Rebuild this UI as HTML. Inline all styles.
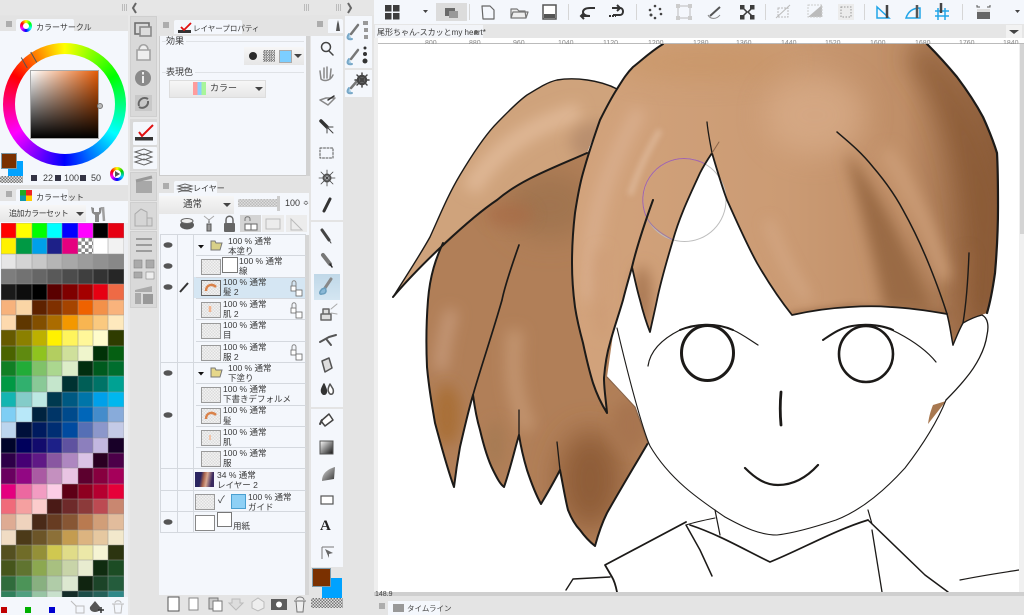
<!DOCTYPE html>
<html><head><meta charset="utf-8">
<style>
html,body{margin:0;padding:0;width:1024px;height:615px;overflow:hidden;background:#e4e4e4}
body{position:relative;font:8.5px "Liberation Sans","Noto Sans CJK JP",sans-serif;color:#333;filter:blur(.3px)}
.a{position:absolute}
.t{position:absolute;white-space:nowrap;line-height:11px;color:#3a3a3a}
.p{position:absolute;background:#f4f7fc}
.h{position:absolute;background:#e3e3e3}
.tab{position:absolute;background:#f4f7fc;border-radius:2px 2px 0 0}
.g{position:absolute;background:#d9d9d9;border:1px solid #cfcfcf;box-sizing:border-box}
.w{position:absolute;background:#f4f7fc;border-radius:1px}
.btn{position:absolute;background:linear-gradient(#f6f6f6,#e6e6e6);border:1px solid #ddd;box-sizing:border-box}
#pal{position:absolute;left:1px;top:223px;width:123px;height:374px;overflow:hidden;display:grid;grid-template-columns:repeat(8,15.33px);grid-auto-rows:15.33px}
#pal i{display:block;box-shadow:inset 0 0 0 .5px rgba(150,150,150,.5)}
.th{position:absolute;width:18px;height:14px;border:1px solid #9a9a9a;background:#e6e6e6 repeating-conic-gradient(#dcdcdc 0 25%,#f2f2f2 0 50%) 0 0/3px 3px}
.sep{position:absolute;left:160px;width:146px;height:1px;background:#d4d8de}
.ck{position:absolute;background:#e8e8e8 repeating-conic-gradient(#777 0 25%,#e0e0e0 0 50%) 0 0/3px 3px}
</style></head><body>

<!-- top strips -->
<div class="a" style="left:0;top:0;width:128px;height:15px;background:#e6e6e6"></div>
<div class="a" style="left:128px;top:0;width:246px;height:15px;background:#e6e6e6"></div>
<div class="a" style="left:128px;top:15px;width:2px;height:600px;background:#e8e8e8"></div>

<!-- LEFT PANEL color circle -->
<div class="h" style="left:0;top:16px;width:128px;height:15px"></div>
<div class="tab" style="left:16px;top:19px;width:58px;height:13px"></div>
<div class="p" style="left:0;top:31px;width:128px;height:154px"></div>
<div class="t" style="left:36px;top:22px;font-size:8px">カラーサークル</div>
<div class="a" style="left:20px;top:20px;width:12px;height:12px;border-radius:50%;background:conic-gradient(#ff0,#0f0,#0ff,#00f,#f0f,#f00,#ff0)"></div>
<div class="a" style="left:23px;top:23px;width:6px;height:6px;border-radius:50%;background:#fff"></div>
<div class="a" style="left:3px;top:43px;width:123px;height:123px;border-radius:50%;background:conic-gradient(#ff0 0deg,#0f0 60deg,#0ff 120deg,#00f 180deg,#f0f 240deg,#f00 300deg,#ff0 360deg)"></div>
<div class="a" style="left:15px;top:54px;width:100px;height:100px;border-radius:50%;background:#f4f7fc"></div>
<div class="a" style="left:30px;top:70px;width:69px;height:69px;box-sizing:border-box;border:1px solid #aaa;background:linear-gradient(to bottom,rgba(0,0,0,0),#000),linear-gradient(to right,#fff,#e45c08)"></div>
<div class="a" style="left:97px;top:103px;width:4px;height:4px;background:#bbb;border-radius:50%;border:.5px solid #777"></div>
<div class="a" style="left:23px;top:54px;width:10px;height:12px;transform:rotate(-30deg);border-left:1px solid #555;border-right:1px solid #555"></div>
<div class="a" style="left:8px;top:161px;width:15px;height:15px;background:#00a2ff"></div>
<div class="a" style="left:1px;top:153px;width:14px;height:14px;background:#7a3000;border:1px solid #7d99a8"></div>
<div class="ck" style="left:0;top:176px;width:23px;height:7px"></div>
<div class="a" style="left:31px;top:175px;width:6px;height:6px;background:#334;"></div>
<div class="t" style="left:43px;top:173px;font-size:9px">22</div>
<div class="a" style="left:55px;top:175px;width:6px;height:6px;background:#334;"></div>
<div class="t" style="left:64px;top:173px;font-size:9px">100</div>
<div class="a" style="left:80px;top:175px;width:6px;height:6px;background:#334;"></div>
<div class="t" style="left:91px;top:173px;font-size:9px">50</div>
<div class="a" style="left:110px;top:167px;width:14px;height:14px;border-radius:50%;background:conic-gradient(#ff0,#0c0,#0cf,#00f,#f0f,#f00,#ff0)"></div>
<div class="a" style="left:113px;top:170px;width:8px;height:8px;border-radius:50%;background:#fff"></div>
<div class="a" style="left:115px;top:171px;border-left:5px solid #555;border-top:3px solid transparent;border-bottom:3px solid transparent"></div>

<!-- color set -->
<div class="h" style="left:0;top:186px;width:128px;height:15px"></div>
<div class="tab" style="left:16px;top:189px;width:52px;height:13px"></div>
<div class="p" style="left:0;top:201px;width:128px;height:414px"></div>
<div class="t" style="left:36px;top:192px;font-size:8px">カラーセット</div>
<div class="a" style="left:20px;top:190px;width:12px;height:11px;background:conic-gradient(#e22 25%,#fc0 0 50%,#19a 0 75%,#2a2 0)"></div>
<div class="btn" style="left:0;top:205px;width:86px;height:17px;border:0"></div>
<div class="t" style="left:9px;top:208px;font-size:8px;letter-spacing:-.6px">追加カラーセット</div>
<div class="a" style="left:76px;top:212px;border-top:4px solid #444;border-left:4px solid transparent;border-right:4px solid transparent"></div>
<div id="pal">
<i style="background:#f00"></i><i style="background:#ff0"></i><i style="background:#0f0"></i><i style="background:#0ff"></i><i style="background:#00f"></i><i style="background:#f0f"></i><i style="background:#000"></i><i style="background:#e60012"></i>
<i style="background:#fff100"></i><i style="background:#009944"></i><i style="background:#00a0e9"></i><i style="background:#1d2088"></i><i style="background:#e4007f"></i><i style="background:#fff repeating-conic-gradient(#888 0 25%,#fff 0 50%) 0 0/7px 7px"></i><i style="background:#fff"></i><i style="background:#f2f2f2"></i>
<i style="background:#e6e6e6"></i><i style="background:#d4d4d4"></i><i style="background:#c8c8c8"></i><i style="background:#b5b5b5"></i><i style="background:#a8a8a8"></i><i style="background:#9c9c9c"></i><i style="background:#919191"></i><i style="background:#888"></i>
<i style="background:#7d7d7d"></i><i style="background:#727272"></i><i style="background:#666"></i><i style="background:#595959"></i><i style="background:#4c4c4c"></i><i style="background:#3f3f3f"></i><i style="background:#333"></i><i style="background:#262626"></i>
<i style="background:#1a1a1a"></i><i style="background:#0d0d0d"></i><i style="background:#000"></i><i style="background:#5a0000"></i><i style="background:#7f0000"></i><i style="background:#a40000"></i><i style="background:#e60012"></i><i style="background:#ee6a45"></i>
<i style="background:#f7b27c"></i><i style="background:#fad5a5"></i><i style="background:#5e2200"></i><i style="background:#7f3000"></i><i style="background:#a54400"></i><i style="background:#ef6200"></i><i style="background:#f39149"></i><i style="background:#f9b37c"></i>
<i style="background:#fdd9ae"></i><i style="background:#5f3700"></i><i style="background:#824f00"></i><i style="background:#ab6c00"></i><i style="background:#f39800"></i><i style="background:#f8b551"></i><i style="background:#fac97f"></i><i style="background:#fee9bd"></i>
<i style="background:#665a00"></i><i style="background:#8b8000"></i><i style="background:#bdb000"></i><i style="background:#fff100"></i><i style="background:#fff45c"></i><i style="background:#fff799"></i><i style="background:#fffccc"></i><i style="background:#2f3c00"></i>
<i style="background:#4a6300"></i><i style="background:#5f8a10"></i><i style="background:#8fc31f"></i><i style="background:#b3ce60"></i><i style="background:#cfe09b"></i><i style="background:#eff5cc"></i><i style="background:#013207"></i><i style="background:#055f12"></i>
<i style="background:#117f24"></i><i style="background:#22ac38"></i><i style="background:#80c269"></i><i style="background:#abd78f"></i><i style="background:#dcedc8"></i><i style="background:#022e0f"></i><i style="background:#005a1e"></i><i style="background:#006e2e"></i>
<i style="background:#009944"></i><i style="background:#31b06e"></i><i style="background:#89c997"></i><i style="background:#c5e6cc"></i><i style="background:#003232"></i><i style="background:#005e56"></i><i style="background:#007367"></i><i style="background:#00a293"></i>
<i style="background:#13b5b1"></i><i style="background:#84ccc9"></i><i style="background:#bde8e3"></i><i style="background:#00394f"></i><i style="background:#005982"></i><i style="background:#0075a9"></i><i style="background:#00a0e9"></i><i style="background:#00b7ee"></i>
<i style="background:#7ecef4"></i><i style="background:#b8e8f9"></i><i style="background:#00233f"></i><i style="background:#003567"></i><i style="background:#004a8c"></i><i style="background:#0066b9"></i><i style="background:#448ccb"></i><i style="background:#88abda"></i>
<i style="background:#bcd5ee"></i><i style="background:#00103a"></i><i style="background:#001b5f"></i><i style="background:#002e73"></i><i style="background:#004ba0"></i><i style="background:#556fb5"></i><i style="background:#8c97cb"></i><i style="background:#c4cae6"></i>
<i style="background:#00042a"></i><i style="background:#00005c"></i><i style="background:#120b6d"></i><i style="background:#1d2088"></i><i style="background:#5f52a0"></i><i style="background:#8c7fbd"></i><i style="background:#c3b7e0"></i><i style="background:#180028"></i>
<i style="background:#2e0048"></i><i style="background:#460074"></i><i style="background:#601986"></i><i style="background:#8957a1"></i><i style="background:#ae87c0"></i><i style="background:#dac3e6"></i><i style="background:#2a0022"></i><i style="background:#4c0049"></i>
<i style="background:#6a005f"></i><i style="background:#920783"></i><i style="background:#aa5aa3"></i><i style="background:#c490bf"></i><i style="background:#e9c4e3"></i><i style="background:#5c002e"></i><i style="background:#87003f"></i><i style="background:#a5005a"></i>
<i style="background:#e4007f"></i><i style="background:#ec68a0"></i><i style="background:#f29cc2"></i><i style="background:#fccde5"></i><i style="background:#5e0016"></i><i style="background:#8e0020"></i><i style="background:#b50030"></i><i style="background:#e60039"></i>
<i style="background:#f06a7a"></i><i style="background:#f5a0a0"></i><i style="background:#fccccc"></i><i style="background:#4a1a16"></i><i style="background:#6e2a2a"></i><i style="background:#8c3a3a"></i><i style="background:#bc4a52"></i><i style="background:#c98770"></i>
<i style="background:#deab93"></i><i style="background:#efd3bd"></i><i style="background:#4a2a18"></i><i style="background:#673c22"></i><i style="background:#875634"></i><i style="background:#b97a50"></i><i style="background:#d19e78"></i><i style="background:#e2bc9c"></i>
<i style="background:#f0dcc4"></i><i style="background:#4c3a18"></i><i style="background:#6c5528"></i><i style="background:#8c7038"></i><i style="background:#c49c50"></i><i style="background:#dcb480"></i><i style="background:#e6c8a0"></i><i style="background:#f2e8cc"></i>
<i style="background:#545020"></i><i style="background:#706c28"></i><i style="background:#949038"></i><i style="background:#d0c850"></i><i style="background:#e0dc88"></i><i style="background:#ece8a8"></i><i style="background:#f6f4d4"></i><i style="background:#2c3410"></i>
<i style="background:#46561c"></i><i style="background:#607430"></i><i style="background:#8ca850"></i><i style="background:#a8c080"></i><i style="background:#c8d4a8"></i><i style="background:#e8ecd0"></i><i style="background:#102c10"></i><i style="background:#1c4c24"></i>
<i style="background:#306c3c"></i><i style="background:#4c9458"></i><i style="background:#88b080"></i><i style="background:#b0cca8"></i><i style="background:#dce8d0"></i><i style="background:#102410"></i><i style="background:#1c4428"></i><i style="background:#245c3c"></i>
<i style="background:#30805c"></i><i style="background:#50a080"></i><i style="background:#98c4a4"></i><i style="background:#c8e0cc"></i><i style="background:#142c28"></i><i style="background:#1c4c48"></i><i style="background:#246058"></i><i style="background:#308888"></i>
</div>
<div class="a" style="left:124px;top:223px;width:4px;height:374px;background:#eceef2"></div>
<div class="a" style="left:1px;top:607px;width:6px;height:6px;background:#c00000"></div>
<div class="a" style="left:25px;top:607px;width:6px;height:6px;background:#00b000"></div>
<div class="a" style="left:49px;top:607px;width:6px;height:6px;background:#0000d0"></div>

<!-- COL 2 -->
<div class="a" style="left:130px;top:15px;width:28px;height:600px;background:#e4e4e4"></div>
<div class="g" style="left:130px;top:16px;width:27px;height:101px"></div>
<div class="a" style="left:130px;top:119px;width:27px;height:52px;background:#d9d9d9"></div>
<div class="w" style="left:133px;top:122px;width:24px;height:23px"></div>
<div class="w" style="left:133px;top:147px;width:24px;height:22px"></div>
<div class="g" style="left:130px;top:172px;width:27px;height:29px"></div>
<div class="g" style="left:130px;top:202px;width:27px;height:28px"></div>
<div class="g" style="left:130px;top:231px;width:27px;height:77px"></div>

<!-- layer property panel -->
<div class="h" style="left:158px;top:16px;width:152px;height:19px"></div>
<div class="tab" style="left:174px;top:20px;width:68px;height:14px"></div>
<div class="t" style="left:193px;top:23px;font-size:7.5px">レイヤープロパティ</div>
<div class="p" style="left:159px;top:36px;width:150px;height:140px;border-left:1px solid #ccc;border-bottom:1px solid #ccc;box-sizing:border-box"></div>
<div class="a" style="left:306px;top:36px;width:4px;height:140px;background:#d2d2d2"></div>
<div class="a" style="left:162px;top:41px;width:142px;height:1px;background:#dfe2e6"></div>
<div class="t" style="left:166px;top:36px;font-size:9px;background:#f4f7fc;padding:0 2px 0 0">効果</div>
<div class="btn" style="left:244px;top:47px;width:60px;height:18px;border:0"></div>
<div class="a" style="left:249px;top:52px;width:8px;height:8px;border-radius:50%;background:#2a2a2a"></div>
<div class="ck" style="left:263px;top:50px;width:12px;height:12px;background-size:2.5px 2.5px"></div>
<div class="a" style="left:279px;top:50px;width:11px;height:11px;background:#7cceff;border:1px solid #aaa"></div>
<div class="a" style="left:294px;top:54px;border-top:4px solid #444;border-left:4px solid transparent;border-right:4px solid transparent"></div>
<div class="a" style="left:162px;top:72px;width:142px;height:1px;background:#dfe2e6"></div>
<div class="t" style="left:166px;top:67px;font-size:9px;background:#f4f7fc;padding-right:2px">表現色</div>
<div class="btn" style="left:169px;top:80px;width:97px;height:18px"></div>
<div class="a" style="left:193px;top:82px;width:13px;height:13px;background:linear-gradient(to right,#ff9c9c 33%,#8ccfff 33% 66%,#a8f59a 66%)"></div>
<div class="t" style="left:210px;top:83px;font-size:9px">カラー</div>
<div class="a" style="left:255px;top:87px;border-top:4px solid #444;border-left:4px solid transparent;border-right:4px solid transparent"></div>

<!-- layer panel -->
<div class="h" style="left:158px;top:178px;width:152px;height:16px"></div>
<div class="tab" style="left:174px;top:181px;width:43px;height:13px"></div>
<div class="t" style="left:193px;top:183px;font-size:8px">レイヤー</div>
<div class="p" style="left:159px;top:193px;width:150px;height:402px"></div>
<div class="btn" style="left:159px;top:196px;width:75px;height:18px;border:0"></div>
<div class="t" style="left:183px;top:199px;font-size:9.5px">通常</div>
<div class="a" style="left:223px;top:203px;border-top:4px solid #444;border-left:4px solid transparent;border-right:4px solid transparent"></div>
<div class="ck" style="left:238px;top:199px;width:42px;height:8px;background:#ddd repeating-conic-gradient(#bbb 0 25%,#ddd 0 50%) 0 0/3px 3px"></div>
<div class="a" style="left:277px;top:196px;width:3px;height:15px;background:#ccc"></div>
<div class="t" style="left:285px;top:198px;font-size:9px">100</div>
<div class="t" style="left:303px;top:198px;font-size:7px">≎</div>
<div class="a" style="left:240px;top:215px;width:21px;height:17px;background:#d4d4d4"></div>
<div class="a" style="left:262px;top:215px;width:22px;height:17px;background:#ececec"></div>
<div class="a" style="left:286px;top:215px;width:21px;height:17px;background:#ececec"></div>
<div class="a" style="left:160px;top:234px;width:146px;height:1px;background:#d4d8de"></div>
<div class="a" style="left:193px;top:277px;width:113px;height:21px;background:#d5e6f3"></div>
<div class="a" style="left:305px;top:235px;width:4px;height:360px;background:#d6d6d6"></div>
<div class="a" style="left:160px;top:234px;width:1px;height:299px;background:#d4d8de"></div>
<div class="a" style="left:177px;top:234px;width:1px;height:299px;background:#d4d8de"></div>
<div class="a" style="left:193px;top:234px;width:1px;height:299px;background:#d4d8de"></div>
<div class="sep" style="top:255px;left:196px;width:110px"></div>
<div class="sep" style="top:277px;left:196px;width:110px"></div>
<div class="sep" style="top:298px;left:196px;width:110px"></div>
<div class="sep" style="top:319px;left:196px;width:110px"></div>
<div class="sep" style="top:341px;left:196px;width:110px"></div>
<div class="sep" style="top:362px;"></div>
<div class="sep" style="top:383px;left:196px;width:110px"></div>
<div class="sep" style="top:405px;left:196px;width:110px"></div>
<div class="sep" style="top:426px;left:196px;width:110px"></div>
<div class="sep" style="top:447px;left:196px;width:110px"></div>
<div class="sep" style="top:468px;"></div>
<div class="sep" style="top:490px;"></div>
<div class="sep" style="top:511px;"></div>
<div class="sep" style="top:532px;"></div>

<div class="t" style="left:228px;top:236px">100 % 通常</div><div class="t" style="left:228px;top:246px">本塗り</div>
<div class="th" style="left:201px;top:259px"></div>
<div class="a" style="left:222px;top:257px;width:14px;height:14px;border:1px solid #777;background:#fff"></div>
<div class="t" style="left:239px;top:256px">100 % 通常</div><div class="t" style="left:239px;top:266px">線</div>
<div class="th" style="left:201px;top:280px;border:1.5px solid #666"></div>
<div class="t" style="left:223px;top:277px">100 % 通常</div><div class="t" style="left:223px;top:287px">髪 2</div>
<div class="th" style="left:201px;top:302px"></div>
<div class="t" style="left:223px;top:299px">100 % 通常</div><div class="t" style="left:223px;top:309px">肌 2</div>
<div class="th" style="left:201px;top:323px"></div>
<div class="t" style="left:223px;top:320px">100 % 通常</div><div class="t" style="left:223px;top:330px">目</div>
<div class="th" style="left:201px;top:345px"></div>
<div class="t" style="left:223px;top:342px">100 % 通常</div><div class="t" style="left:223px;top:352px">服 2</div>
<div class="t" style="left:228px;top:363px">100 % 通常</div><div class="t" style="left:228px;top:373px">下塗り</div>
<div class="th" style="left:201px;top:387px"></div>
<div class="t" style="left:223px;top:384px">100 % 通常</div><div class="t" style="left:223px;top:394px">下書きデフォルメ</div>
<div class="th" style="left:201px;top:408px"></div>
<div class="t" style="left:223px;top:405px">100 % 通常</div><div class="t" style="left:223px;top:416px">髪</div>
<div class="th" style="left:201px;top:430px"></div>
<div class="t" style="left:223px;top:427px">100 % 通常</div><div class="t" style="left:223px;top:437px">肌</div>
<div class="th" style="left:201px;top:451px"></div>
<div class="t" style="left:223px;top:448px">100 % 通常</div><div class="t" style="left:223px;top:458px">服</div>
<div class="a" style="left:195px;top:472px;width:19px;height:15px;background:linear-gradient(100deg,#2a2560 0 30%,#a8644c 45%,#d8a890 60%,#3a2a60 85%)"></div>
<div class="t" style="left:217px;top:470px">34 % 通常</div><div class="t" style="left:217px;top:480px">レイヤー 2</div>
<div class="th" style="left:195px;top:494px"></div>
<div class="t" style="left:218px;top:495px;font-size:10px">✓</div>
<div class="a" style="left:231px;top:494px;width:13px;height:13px;background:#8ed0f5;border:1px solid #4a9fd0"></div>
<div class="t" style="left:248px;top:492px">100 % 通常</div><div class="t" style="left:248px;top:502px">ガイド</div>
<div class="a" style="left:195px;top:515px;width:18px;height:14px;background:#fff;border:1px solid #888"></div>
<div class="a" style="left:217px;top:512px;width:13px;height:13px;background:#fff;border:1px solid #777"></div>
<div class="t" style="left:233px;top:521px">用紙</div>

<!-- tool panel -->
<div class="a" style="left:310px;top:15px;width:34px;height:600px;background:#e4e4e4"></div>
<div class="tab" style="left:328px;top:19px;width:15px;height:14px"></div>
<div class="p" style="left:311px;top:36px;width:32px;height:184px"></div>
<div class="p" style="left:311px;top:222px;width:32px;height:185px"></div>
<div class="p" style="left:311px;top:409px;width:32px;height:158px"></div>
<div class="a" style="left:314px;top:274px;width:26px;height:26px;background:linear-gradient(#c0d8e8,#d4e6f2)"></div>
<div class="a" style="left:322px;top:578px;width:20px;height:20px;background:#00a2ff"></div>
<div class="a" style="left:312px;top:568px;width:19px;height:19px;background:#7a3000;border:1px solid #7d99a8;box-sizing:border-box"></div>
<div class="ck" style="left:311px;top:598px;width:32px;height:10px"></div>
<div class="t" style="left:320px;top:518px;font:bold 15px/16px 'Liberation Serif',serif;color:#222">A</div>

<!-- subtool -->
<div class="a" style="left:344px;top:15px;width:30px;height:600px;background:#e4e4e4"></div>
<div class="p" style="left:345px;top:16px;width:27px;height:52px"></div>
<div class="p" style="left:345px;top:70px;width:27px;height:27px"></div>

<!-- TOP TOOLBAR -->
<div class="p" style="left:374px;top:0;width:650px;height:24px"></div>
<div class="a" style="left:436px;top:3px;width:31px;height:18px;background:#dcdcdc"></div>
<div class="a" style="left:374px;top:24px;width:650px;height:14px;background:#e6e6e6"></div>
<div class="a" style="left:375px;top:25px;width:108px;height:13px;background:#f2f4f8"></div>
<div class="t" style="left:377px;top:27px;font-size:8px">尾形ちゃん-スカッとmy heart*</div>
<div class="a" style="left:474px;top:30px;width:4px;height:4px;border-radius:50%;background:#666"></div>
<div class="a" style="left:1006px;top:25px;width:16px;height:13px;background:#f2f2f2"></div>
<div class="a" style="left:1009px;top:30px;border-top:4px solid #444;border-left:5px solid transparent;border-right:5px solid transparent"></div>

<!-- CANVAS + ruler -->
<div class="a" style="left:374px;top:38px;width:650px;height:6px;background:#fff;overflow:hidden;border-bottom:1px solid #bbb;box-sizing:border-box"></div>
<div class="a" style="left:374px;top:38px;width:4px;height:556px;background:#efefef"></div>
<div class="a" style="left:378px;top:44px;width:641px;height:548px;background:#fff"></div>
<div class="a" style="left:1019px;top:44px;width:5px;height:548px;background:#f0f0f0"></div>
<div class="a" style="left:1020px;top:44px;width:4px;height:190px;background:#d4d4d4"></div>
<div class="a" style="left:378px;top:38px;width:641px;height:6px;overflow:hidden;color:#888;font-size:7px;line-height:12px">
<span class="a" style="left:47px">800</span><span class="a" style="left:91px">880</span><span class="a" style="left:135px">960</span><span class="a" style="left:180px">1040</span><span class="a" style="left:225px">1120</span><span class="a" style="left:270px">1200</span><span class="a" style="left:315px">1280</span><span class="a" style="left:358px">1360</span><span class="a" style="left:403px">1440</span><span class="a" style="left:447px">1520</span><span class="a" style="left:492px">1600</span><span class="a" style="left:537px">1680</span><span class="a" style="left:581px">1760</span><span class="a" style="left:625px">1840</span>
</div>

<svg class="a" style="left:0;top:0" width="1024" height="615" viewBox="0 0 1024 615" xmlns="http://www.w3.org/2000/svg">
<defs>
<clipPath id="cv"><rect x="378" y="44" width="641" height="548"/></clipPath>
<filter id="b3" filterUnits="userSpaceOnUse" x="370" y="30" width="660" height="570"><feGaussianBlur stdDeviation="3"/></filter>
<filter id="b6" filterUnits="userSpaceOnUse" x="370" y="30" width="660" height="570"><feGaussianBlur stdDeviation="7"/></filter>
<filter id="b12" filterUnits="userSpaceOnUse" x="370" y="30" width="660" height="570"><feGaussianBlur stdDeviation="14"/></filter>
<path id="upper" d="M393 297C410 270 420 255 430 237C440 215 448 195 460 175C472 155 485 135 497 123C508 112 516 103 527 95C540 87 548 82 557 80C575 77 600 80 617 89L600 120L587 153C553 168 520 180 497 200C470 218 420 265 393 297Z"/>
<path id="lower" d="M443 243C436 258 430 275 428 300C426 325 426 345 427 367C429 390 432 405 435 423C441 445 447 468 454 487C456 470 458 458 460 447C464 430 468 412 473 395C475 410 477 420 480 430C484 447 488 460 493 470C497 478 500 484 504 487C510 470 514 452 519 435C521 448 524 460 527 470C532 485 536 495 541 504C548 492 554 482 560 470C563 485 565 498 568 510C572 520 576 526 580 530C585 537 590 542 595 546C598 535 602 523 607 513C620 490 635 465 648 443C643 430 639 418 635 407C625 397 615 387 607 377L625 250L600 130L587 153C553 168 520 180 497 200C480 212 460 228 443 243Z"/>
<path id="front" d="M663 44C650 52 642 60 633 67C626 74 622 81 617 89C610 100 605 110 600 120C594 137 588 155 583 173C579 187 577 200 575 213C573 230 572 247 572 263C572 278 573 292 575 307C577 320 580 332 583 343C586 357 589 370 593 383C597 395 602 405 607 413C606 400 604 390 604 378C605 365 607 353 610 343C614 328 619 314 623 300C626 288 629 278 632 267C635 280 637 290 640 300C643 312 646 322 650 332C652 322 655 310 657 300C661 280 667 260 673 240C680 215 690 195 700 173C704 165 708 159 712 153C717 170 722 187 727 200C737 222 746 243 757 263C768 282 780 300 792 315C810 311 830 308 850 307C865 306 878 306 890 307C910 308 930 311 947 314C950 325 951 335 953 345C956 338 959 330 963 323C970 319 978 316 987 313C991 300 993 287 995 273C997 250 998 228 998 207C998 188 998 170 997 153C993 140 988 128 983 117C975 102 966 89 957 77C947 65 937 54 927 44Z"/>
<clipPath id="cu"><use href="#upper"/></clipPath>
<clipPath id="cl"><use href="#lower"/></clipPath>
<clipPath id="cf"><use href="#front"/></clipPath>
<linearGradient id="fg" x1="0" x2="1" y1="0" y2="0"><stop offset="0" stop-color="#d2a37c"/><stop offset=".5" stop-color="#cb9b74"/><stop offset=".78" stop-color="#bf8e67"/><stop offset="1" stop-color="#8a5b39"/></linearGradient>
</defs>
<g clip-path="url(#cv)">
<!-- upper lobe -->
<use href="#upper" fill="#cfa37c"/>
<g clip-path="url(#cu)">
<path d="M470 190C495 150 530 125 580 112" stroke="#dfb795" stroke-width="18" fill="none" filter="url(#b6)"/>
<ellipse cx="596" cy="142" rx="26" ry="20" fill="#b98f6e" filter="url(#b6)"/>
</g>
<!-- lower lobes -->
<use href="#lower" fill="#b17f58"/>
<g clip-path="url(#cl)">
<ellipse cx="550" cy="205" rx="44" ry="34" fill="#a17550" filter="url(#b12)"/>
<ellipse cx="510" cy="215" rx="24" ry="12" fill="#a86c47" opacity=".7" filter="url(#b6)"/>
<path d="M452 310C445 335 441 355 441 370" stroke="#c69a7a" stroke-width="12" fill="none" filter="url(#b6)"/>
<ellipse cx="447" cy="415" rx="14" ry="30" fill="#a96f38" filter="url(#b6)"/>
<path d="M515 330C512 370 512 390 528 430" stroke="#c2946f" stroke-width="16" fill="none" filter="url(#b6)"/>
<ellipse cx="590" cy="480" rx="32" ry="50" fill="#8f5d37" filter="url(#b12)"/>
<ellipse cx="630" cy="425" rx="18" ry="26" fill="#a7754f" filter="url(#b6)"/>
<ellipse cx="495" cy="445" rx="9" ry="24" fill="#a67a52" filter="url(#b6)"/>
</g>
<!-- front -->
<use href="#front" fill="url(#fg)"/>
<g clip-path="url(#cf)">
<path d="M590 300C585 240 600 180 640 110" stroke="#d9ae8d" stroke-width="14" fill="none" filter="url(#b6)"/>
<path d="M630 195C638 170 648 150 660 130" stroke="#e6c6ac" stroke-width="6" fill="none" opacity=".55" filter="url(#b3)"/>
<path d="M603 335C599 305 598 275 602 250" stroke="#cc9a73" stroke-width="8" fill="none" filter="url(#b6)"/>
<ellipse cx="700" cy="62" rx="90" ry="14" fill="#c6925f" opacity=".6" filter="url(#b12)"/>
<ellipse cx="642" cy="300" rx="10" ry="34" fill="#a97852" filter="url(#b6)"/>
<path d="M845 150C875 185 905 240 935 312L885 310C875 260 858 200 845 150Z" fill="#9a6b45" filter="url(#b6)"/>
<path d="M925 44C955 80 985 130 1000 200L1000 320L965 320C975 250 965 120 905 55Z" fill="#8a5a35" filter="url(#b12)"/>
<path d="M885 150C908 185 928 225 945 280" stroke="#cc9d77" stroke-width="14" fill="none" filter="url(#b6)"/>
<ellipse cx="815" cy="115" rx="50" ry="40" fill="#d9ad8a" opacity=".7" filter="url(#b12)"/>
<path d="M768 220C780 255 795 280 808 300" stroke="#d8ad8c" stroke-width="8" fill="none" opacity=".8" filter="url(#b6)"/>
<path d="M790 315L850 307L950 314" stroke="#8c5e3c" stroke-width="7" fill="none" opacity=".45" filter="url(#b3)"/>
<path d="M960 345L968 250" stroke="#9e6a45" stroke-width="8" fill="none" opacity=".7" filter="url(#b6)"/>
</g>
<!-- small hair piece below ear -->
<path d="M946 401L928 424C929 416 931 410 933 405Z" fill="#a87850"/>

<!-- cursor circle -->
<circle cx="684.5" cy="200" r="41.5" fill="none" stroke="#bdbdbd" stroke-width="1"/>
<path d="M646 216A41.500 41.500 0 0 1 684 158.500C692 158.500 700 161 705 164" fill="none" stroke="#a463a8" stroke-width="1"/>
<path d="M646 216C650 225 658 232 673 240" fill="none" stroke="#a07aa0" stroke-width="1"/>

<!-- outlines -->
<g fill="none" stroke="#1c1a18" stroke-linecap="round" stroke-linejoin="round">
<path d="M393 297C410 270 420 255 430 237C440 215 448 195 460 175C472 155 485 135 497 123C508 112 516 103 527 95C540 87 548 82 557 80C575 77 600 80 617 89" stroke-width="1.400"/>
<path d="M393 297C420 265 470 218 497 200C520 180 553 168 587 153" stroke-width="2"/>
<path d="M443 243C436 258 430 275 428 300C426 325 426 345 427 367C429 390 432 405 435 423C441 445 447 468 454 487C456 470 458 458 460 447C464 430 468 412 473 395C475 410 477 420 480 430C484 447 488 460 493 470C497 478 500 484 504 487C510 470 514 452 519 435C521 448 524 460 527 470C532 485 536 495 541 504C548 492 554 482 560 470C563 485 565 498 568 510C572 520 576 526 580 530C585 537 590 542 595 546C598 535 602 523 607 513C620 490 635 465 648 443" stroke-width="2"/>
<path d="M473 395C480 370 492 335 502 300C505 285 513 262 519 245" stroke-width="1.700"/>
<path d="M519 410L519 435M557 442L560 470" stroke-width="1.300"/>
<path d="M607 377L635 407L648 443" stroke-width="1.200" stroke="#8a6448"/>
<path d="M663 44C650 52 642 60 633 67C626 74 622 81 617 89C610 100 605 110 600 120C594 137 588 155 583 173C579 187 577 200 575 213C573 230 572 247 572 263C572 278 573 292 575 307C577 320 580 332 583 343C586 357 589 370 593 383C597 395 602 405 607 413C606 400 604 390 604 378C605 365 607 353 610 343C614 328 619 314 623 300C626 288 629 278 632 267C636 250 644 225 653 200" stroke-width="2"/>
<path d="M632 267C635 280 637 290 640 300C643 312 646 322 650 332C652 322 655 310 657 300C661 280 667 260 673 240C680 215 690 195 700 173C704 165 708 159 712 153C717 170 722 187 727 200C737 222 746 243 757 263C768 282 780 300 792 315C810 311 830 308 850 307C865 306 878 306 890 307C910 308 930 311 947 314" stroke-width="1.800"/>
<path d="M707 122C708 133 710 142 712 153" stroke-width="1.300"/>
<path d="M712 153L719 142" stroke-width="1" stroke="#8a6448"/>
<path d="M927 44C937 54 947 65 957 77C966 89 975 102 983 117C988 128 993 140 997 153C998 170 998 188 998 207C998 228 997 250 995 273C993 287 991 300 987 313" stroke-width="2.200"/>
<path d="M837 132C850 143 862 153 873 167C885 181 895 195 903 210C913 228 922 247 930 267C936 282 942 298 947 314C950 325 951 335 953 345" stroke-width="1.500"/>
<path d="M969 253C968 280 966 305 963 323C959 330 956 338 953 345" stroke-width="1.400"/>
<!-- ear & face -->
<path d="M963 323C970 319 978 316 982 315C988 318 989 326 987 335C985 350 976 366 966 378C958 388 952 394 946 400" stroke-width="1.300"/>
<path d="M946 400C938 420 925 442 905 468C885 490 862 510 836 520C815 527 795 533 777 535C760 535 745 528 725 517C700 500 670 480 650 446C642 428 628 375 617 328" stroke-width="1.100"/>
<path d="M648 366C650 352 660 340 680 330C695 324 715 322 733 330C742 334 750 340 758 345" stroke-width="1.200"/>
<path d="M680 330C695 324 715 322 733 330" stroke-width="2"/>
<path d="M823 340C832 334 840 328 852 326C868 323 885 326 898 333C915 342 928 352 936 362" stroke-width="1.200"/>
<path d="M823 340C832 334 840 328 852 326C868 323 885 326 893 330" stroke-width="2"/>
<ellipse cx="707.500" cy="353" rx="26" ry="27.500" stroke-width="3"/>
<ellipse cx="866" cy="354" rx="27" ry="28" stroke-width="2.600"/>
<path d="M781 392C780 403 780 414 781 425" stroke-width="2.800"/>
<path d="M745 468C755 478 765 485 778 485C795 485 808 476 818 465" stroke-width="2.200"/>
<!-- collar -->
<path d="M686 522L605 565L612 577C615 582 616 587 617 592" stroke-width="1.800"/>
<path d="M610 577L573 579L566 590" stroke-width="1.400"/>
<path d="M686 525L700 550L712 576" stroke-width="1.500"/>
<path d="M686 525C695 522 705 520 715 518" stroke-width="1.100"/>
<path d="M690 525C720 535 745 550 770 562C800 550 835 530 868 520" stroke-width="1.700"/>
<path d="M715 510L720 535" stroke-width="1.200"/>
<path d="M868 510L872 524" stroke-width="1.200"/>
<path d="M868 520L925 575L948 592" stroke-width="1.500"/>
<path d="M872 530L882 592" stroke-width="1.300"/>
<path d="M960 580C985 575 1000 573 1019 570" stroke-width="1.200"/>
</g>
</g>

<!-- bottom status -->
<rect x="374" y="592" width="650" height="23" fill="#e4e4e4"/>
<rect x="374" y="592" width="650" height="4" fill="#cfcfcf"/>
<rect x="388" y="601" width="52" height="14" fill="#f4f7fc"/>
<rect x="393" y="604" width="11" height="8" fill="#999"/>
<text x="407" y="611" font-size="7.500" fill="#444" font-family="Liberation Sans, Noto Sans CJK JP, sans-serif">タイムライン</text>
<text x="375" y="596" font-size="7" fill="#444" font-family="Liberation Sans, sans-serif">148.9</text>

<!-- handle & arrows -->
<g fill="none" stroke="#666" stroke-width="2"><path d="M136 3L133 8L136 13"/><path d="M348 3L351 8L348 13"/></g>
<g fill="#bbb"><rect x="122" y="4" width="1" height="7"/><rect x="124" y="4" width="1" height="7"/><rect x="126" y="4" width="1" height="7"/><rect x="304" y="4" width="1" height="7"/><rect x="306" y="4" width="1" height="7"/><rect x="308" y="4" width="1" height="7"/><rect x="336" y="4" width="1" height="7"/><rect x="338" y="4" width="1" height="7"/><rect x="340" y="4" width="1" height="7"/></g>
<!-- panel menu glyphs -->
<g fill="#888"><rect x="6" y="21" width="6" height="6" opacity=".6"/><rect x="6" y="191" width="6" height="6" opacity=".6"/><rect x="163" y="22" width="6" height="6" opacity=".6"/><rect x="163" y="183" width="6" height="6" opacity=".6"/><rect x="317" y="21" width="6" height="6" opacity=".6"/><rect x="379" y="603" width="6" height="6" opacity=".6"/></g>

<!-- col 2 icons -->
<g fill="none" stroke="#6f6f6f" stroke-width="1.600">
<rect x="135" y="23" width="14" height="11"/><rect x="140" y="27" width="11" height="9" fill="#ddd" stroke="#8a8a8a"/>
<path d="M137 60V50H150V60ZM139 50C139 43 148 43 148 50" stroke="#a2a2a2" fill="#eee"/>
<circle cx="143" cy="78" r="8" fill="#8a8a8a" stroke="none"/>
<rect x="135" y="95" width="17" height="16" fill="#c8c8c8" stroke="none"/>
<path d="M139 106A6 6 0 0 1 148 99M148 101A6 6 0 0 1 139 107" stroke="#666" stroke-width="2"/>
</g>
<rect x="142" y="72" width="2" height="2.500" fill="#eee"/><rect x="142" y="76" width="2" height="7" fill="#eee"/>
<rect x="135" y="137" width="18" height="3.500" fill="#333"/><path d="M139 132L142 136L153 125" fill="none" stroke="#e01010" stroke-width="2"/>
<g fill="none" stroke="#666"><path d="M135 152L144 149L152 152L144 155ZM135 157L144 154L152 157L144 160ZM135 162L144 159L152 162L144 165Z"/></g>
<rect x="136" y="181" width="16" height="12" fill="#a8a8a8"/><path d="M136 181L152 177" stroke="#999" stroke-width="3"/>
<path d="M135 226V214L141 209L147 212V226ZM147 218H152V226H147" fill="#d5d5d5" stroke="#aaa"/>
<g fill="#9c9c9c"><rect x="136" y="238" width="16" height="2"/><rect x="136" y="244" width="16" height="2"/><rect x="136" y="250" width="16" height="2"/></g>
<g fill="#aaa" stroke="#888" stroke-width=".6"><rect x="134" y="260" width="8" height="8"/><rect x="146" y="260" width="8" height="8"/><rect x="134" y="272" width="8" height="6"/><rect x="146" y="272" width="8" height="7" fill="#eee"/></g>
<path d="M135 290L152 286V292H135ZM135 293H141V304H135Z" fill="#aaa"/><rect x="143" y="294" width="10" height="10" fill="#999"/>

<!-- color set bottom icons -->
<g fill="none" stroke="#bbb" stroke-width="1"><path d="M71 601L76 606V613H84V606H76"/><path d="M112 604H124M114 604L115 613H121L122 604M115 603C115 600 121 600 121 603"/></g>
<path d="M95 601L100 607C101 610 98 612 95 612C92 612 89 610 90 607Z" fill="#555"/><path d="M98 610H104M101 607V613" stroke="#333" stroke-width="1.500"/>
<!-- wrench -->
<path d="M91 207L92 213L95 215V222H99V215L101 213L102 207L99 208V212H94V208Z" fill="#8a8a8a"/><path d="M103 207L104 221" stroke="#a0a0a0" stroke-width="2.500"/>

<!-- layer prop tab icon -->
<rect x="178" y="30" width="13" height="3" fill="#333"/><path d="M181 27L184 30L191 23" fill="none" stroke="#e01010" stroke-width="1.800"/>
<g fill="none" stroke="#666"><path d="M178 186L185 184L192 186L185 188ZM178 189L185 187L192 189L185 191ZM178 192L185 190L192 192"/></g>
<!-- layer icons row -->
<ellipse cx="187" cy="225" rx="7" ry="4.500" fill="#5a5a5a"/><ellipse cx="187" cy="221" rx="6" ry="2.500" fill="#eee" stroke="#666"/>
<path d="M207 231V224H211V231ZM209 223V219" stroke="#555" fill="#999"/><path d="M204 216L209 220L214 216" stroke="#aaa" fill="none"/>
<rect x="224" y="223" width="11" height="9" rx="1" fill="#666"/><path d="M226 223V220C226 215 233 215 233 220V223" fill="none" stroke="#666" stroke-width="1.500"/>
<g fill="#fff" stroke="#666"><rect x="245" y="224" width="6" height="6"/><rect x="251" y="224" width="6" height="6"/></g>
<path d="M245 221V219C245 216 250 216 250 219V221" fill="none" stroke="#777"/>
<path d="M266 219H280V229H266Z" fill="none" stroke="#bbb"/><path d="M291 219V230H302Z" fill="none" stroke="#bbb"/>

<!-- folders -->
<g>
<path d="M198 245H204L201 248.500Z" fill="#111"/><path d="M211 250V241H215L216 243H222L220 250Z" fill="#d8d088" stroke="#777"/>
<path d="M198 372H204L201 375.500Z" fill="#111"/><path d="M211 377V368H215L216 370H222L220 377Z" fill="#e6d78a" stroke="#777"/>
</g>
<!-- eyes -->
<g id="eyes" fill="#555">
<ellipse cx="168" cy="245" rx="4.500" ry="2.800"/><ellipse cx="168" cy="266" rx="4.500" ry="2.800"/><ellipse cx="168" cy="287" rx="4.500" ry="2.800"/><ellipse cx="168" cy="373" rx="4.500" ry="2.800"/><ellipse cx="168" cy="415" rx="4.500" ry="2.800"/><ellipse cx="168" cy="522" rx="4.500" ry="2.800"/>
</g>
<path d="M180 292L188 283" stroke="#333" stroke-width="2"/>
<!-- thumb detail -->
<path d="M206 291C206 285 212 283 216 287" stroke="#d9824a" stroke-width="2.500" fill="none"/>
<path d="M210 312V306" stroke="#f2b48f" stroke-width="2.500"/>
<path d="M206 419C206 413 212 411 216 415" stroke="#d9824a" stroke-width="2.500" fill="none"/>
<path d="M210 440V435" stroke="#f2c4a8" stroke-width="2"/>
<!-- lock icons -->
<g fill="#fff" stroke="#666" stroke-width=".8">
<rect x="291" y="286" width="5" height="5"/><rect x="296" y="290" width="6" height="6"/><rect x="291" y="308" width="5" height="5"/><rect x="296" y="312" width="6" height="6"/><rect x="291" y="350" width="5" height="5"/><rect x="296" y="354" width="6" height="6"/>
</g>
<path d="M292 286V283C292 280 296 280 296 283V286M292 308V305C292 302 296 302 296 305V308M292 350V347C292 344 296 344 296 347V350" fill="none" stroke="#888"/>
<!-- layer panel bottom -->
<g fill="#fff" stroke="#555" stroke-width="1">
<path d="M168 597H179V611H168Z"/><path d="M189 598H198V610H189Z" stroke="#888"/><path d="M209 598H218V609H209Z" fill="#ccc" stroke="#777"/><path d="M213 601H222V611H213Z" stroke="#777"/>
</g>
<path d="M232 599H240V603H243L236 610L229 603H232Z" fill="#ddd" stroke="#bbb"/>
<path d="M252 602L258 598L264 602V608L258 611L252 608Z" fill="#eee" stroke="#bbb"/>
<rect x="271" y="599" width="16" height="11" fill="#5c5c5c"/><circle cx="279" cy="604.500" r="3" fill="#fff"/>
<path d="M294 601H306M296 601L297 612H303L304 601M296 600C296 596 304 596 304 600" fill="#eee" stroke="#777"/>

<!-- tool icons -->
<g fill="none" stroke="#444" stroke-width="1.500" stroke-linecap="round" stroke-linejoin="round">
<circle cx="326" cy="47" r="4.500"/><path d="M329 51L333 55"/>
<path d="M321 79L320 71M324 78V68M327 78V67M330 79L331 69M321 79C323 81 330 82 333 75" stroke="#888"/>
<path d="M320 100L328 105L335 98L326 98Z" stroke="#888"/><path d="M328 100L334 96" stroke="#333"/>
<path d="M321 121L327 127" stroke-width="3.500" stroke="#333"/><path d="M327 127L333 133M327 127L327 133M327 127L333 127" stroke-width="1"/>
<rect x="320" y="148" width="13" height="10" stroke-dasharray="2 1.500" stroke-width="1" stroke="#555"/>
<circle cx="327" cy="178" r="3.500" stroke="#555" stroke-width="2"/><path d="M321 172L333 184M333 172L321 184M327 170V186M319 178H335" stroke-width=".8"/>
<path d="M324 211L330 199" stroke-width="3" stroke="#333"/>
<path d="M322 230L329 240" stroke-width="3" stroke="#444"/><path d="M329 240L331 243" stroke-width="1"/>
<path d="M323 255L330 264" stroke-width="4" stroke="#777"/><path d="M330 264L332 267" stroke-width="1.500" stroke="#222"/>
<path d="M331 279L325 288" stroke-width="3" stroke="#888"/><path d="M322 289C319 292 319 295 322 294C326 294 327 291 325 288Z" fill="#8ab8d6" stroke="#6a9ebd"/>
<path d="M321 314H331V320H321ZM323 314V309H329V314" stroke="#666" fill="#ddd"/><path d="M331 309L337 304M331 313L337 314" stroke="#aaa" stroke-width="1"/>
<path d="M320 342L329 337L336 335M327 340L331 345" stroke="#555" stroke-width="2"/>
<path d="M322 361L329 358L332 368L325 372Z" fill="#ddd" stroke="#555"/>
<path d="M324 384C322 388 320 391 323 394C326 395 327 392 326 389Z" fill="#333" stroke="#333"/><path d="M330 384C328 388 327 391 330 394C333 395 334 392 333 389Z" fill="#fff" stroke="#555"/>
<path d="M321 421L329 414L333 420L325 426Z" fill="#fff"/><path d="M322 420L320 424" stroke-width="2"/>
</g>
<defs><linearGradient id="gg" x1="0" x2="1" y1="0" y2="1"><stop offset="0" stop-color="#fff"/><stop offset="1" stop-color="#111"/></linearGradient><linearGradient id="gh" x1="0" x2="1" y1="0" y2="1"><stop offset="0" stop-color="#ddd"/><stop offset="1" stop-color="#333"/></linearGradient></defs>
<rect x="320" y="441" width="13" height="13" fill="url(#gg)" stroke="#555"/>
<path d="M322 481C322 473 328 469 335 467L334 479Z" fill="url(#gh)"/>
<rect x="321" y="496" width="12" height="8" fill="#fff" stroke="#555" stroke-width="1.200"/>
<path d="M322 547V559M322 547H334" stroke="#777" fill="none"/><path d="M325 549L333 553L329 554L329 558Z" fill="#666"/>
<!-- tab tool -->
<path d="M336 31H340L339 24L338 20L337 24Z" fill="#555"/>

<!-- subtool icons -->
<g stroke-linecap="round">
<path d="M358 25L351 34" stroke="#777" stroke-width="2.500"/><path d="M349 34C346 38 348 40 352 39" stroke="#78a8c8" stroke-width="2" fill="#a9cfe6"/>
<g fill="#999"><rect x="363" y="21" width="5" height="4"/><rect x="364" y="28" width="4" height="4"/><rect x="364" y="35" width="4" height="4"/></g>
<path d="M358 50L351 59" stroke="#777" stroke-width="2.500"/><path d="M349 59C346 63 348 65 352 64" stroke="#78a8c8" stroke-width="2" fill="#a9cfe6"/>
<g fill="#333"><circle cx="365" cy="48" r="1.500"/><circle cx="365" cy="54" r="2"/><circle cx="365" cy="61" r="2.500"/></g>
<path d="M358 80L351 88" stroke="#777" stroke-width="2.500"/><path d="M349 88C346 92 348 94 352 93" stroke="#78a8c8" stroke-width="2" fill="#a9cfe6"/>
<circle cx="362" cy="80" r="4" fill="none" stroke="#444" stroke-width="2.500"/><path d="M362 73V87M355 80H369M357 75L367 85M367 75L357 85" stroke="#444" stroke-width="1.500"/>
</g>

<!-- toolbar icons -->
<g fill="#3d3d3d"><rect x="385" y="5" width="6.500" height="6.500"/><rect x="393" y="5" width="6.500" height="6.500"/><rect x="385" y="13" width="6.500" height="6.500"/><rect x="393" y="13" width="6.500" height="6.500"/></g>
<path d="M423 10H428L425.500 13Z" fill="#444"/>
<rect x="445" y="8" width="10" height="8" fill="#6a6a6a"/><rect x="449" y="11" width="9" height="7" fill="#999"/>
<g fill="none" stroke="#666" stroke-width="1.200" stroke-linejoin="round">
<path d="M482 6H490L494 10V19H483Z"/>
<path d="M511 18V9H517L519 11H525L526 18ZM511 18L513 12H528L526 18" stroke="#777" fill="#eee"/>
</g>
<path d="M543 5H556V19H543Z" fill="#fff" stroke="#555" stroke-width="1.500"/><rect x="544" y="14" width="11" height="4" fill="#555"/>
<g fill="none" stroke="#333" stroke-width="2"><path d="M595 8C590 8 592 8 590 8C585 8 583 10 583 12C583 14 585 16 590 16H581"/><path d="M584 13L581 16L584 19"/><path d="M612 8H620C624 8 624 15 620 15H613" /><path d="M617 5L620 8L617 11"/><path d="M609 16H616" stroke-dasharray="2 1"/></g>
<g fill="#444"><circle cx="655" cy="6" r="1.300"/><circle cx="660" cy="9" r="1.300"/><circle cx="650" cy="10" r="1.300"/><circle cx="661" cy="14" r="1.300"/><circle cx="651" cy="15" r="1.500"/><circle cx="655" cy="18" r="1.300"/></g>
<rect x="678" y="6" width="12" height="12" fill="none" stroke="#bbb"/><g fill="#ccc"><rect x="676" y="4" width="4" height="4"/><rect x="688" y="4" width="4" height="4"/><rect x="676" y="16" width="4" height="4"/><rect x="688" y="16" width="4" height="4"/></g>
<path d="M710 16L720 7" stroke="#555" stroke-width="2"/><path d="M708 15C710 19 716 20 720 15" fill="none" stroke="#888"/>
<g fill="#3d3d3d"><rect x="740" y="5" width="4.500" height="4.500"/><rect x="750" y="5" width="4.500" height="4.500"/><rect x="740" y="15" width="4.500" height="4.500"/><rect x="750" y="15" width="4.500" height="4.500"/></g>
<path d="M743 8L747 12L743 16M752 8L748 12L752 16" fill="none" stroke="#3d3d3d" stroke-width="1.500"/>
<rect x="778" y="8" width="10" height="9" fill="none" stroke="#bbb" stroke-dasharray="2 1"/><path d="M776 18L790 5" stroke="#bbb"/>
<path d="M808 17H822V5Z" fill="#bbb"/><rect x="808" y="5" width="14" height="12" fill="none" stroke="#ccc" stroke-dasharray="2 1"/>
<rect x="838" y="4" width="16" height="16" fill="#ececec"/><rect x="841" y="7" width="10" height="10" fill="none" stroke="#999" stroke-dasharray="1.500 1.500"/>
<g fill="none" stroke="#22a5e8" stroke-width="1.500"><path d="M877 7V18H889Z"/><path d="M906 18H920V8C912 8 908 12 906 18Z"/><path d="M938 8V20M945 8V20M935 11H949M935 16H949"/></g>
<path d="M887 5V18" stroke="#444" stroke-width="2.500"/><path d="M917 5V18" stroke="#555" stroke-width="2.500"/><path d="M941 3V13" stroke="#444" stroke-width="2.500"/>
<rect x="977" y="9" width="13" height="10" fill="#666"/><rect x="977" y="9" width="13" height="3" fill="#ddd"/><path d="M977 5V7H980M990 5V7H987" stroke="#555" fill="none"/>
<path d="M1015 10H1020L1017.500 13Z" fill="#444"/>
<g fill="#d6d6d6"><rect x="469" y="4" width="1" height="16"/><rect x="568" y="4" width="1" height="16"/><rect x="636" y="4" width="1" height="16"/><rect x="765" y="4" width="1" height="16"/><rect x="864" y="4" width="1" height="16"/><rect x="962" y="4" width="1" height="16"/></g>
</svg>
</body></html>
